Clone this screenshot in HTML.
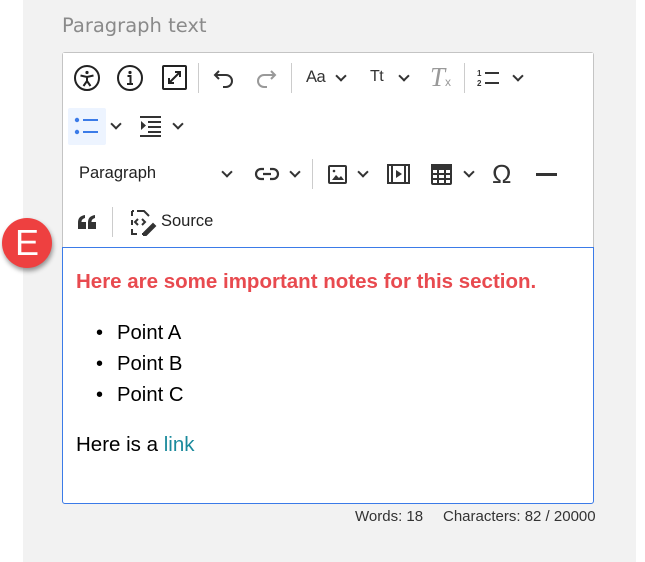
<!DOCTYPE html>
<html><head><style>
body{margin:0;width:645px;height:562px;background:#fff;font-family:"Liberation Sans",sans-serif;position:relative;overflow:hidden}
.a{position:absolute}
.panel{left:23px;top:0;width:613px;height:562px;background:#f2f2f2}
.lbl{left:62px;top:14px;color:#8a8a8a;font-family:"DejaVu Sans","Liberation Sans",sans-serif;font-size:19.5px}
.ed{left:62px;top:52px;width:530px;height:450px;border:1px solid #c4c4c4;border-radius:3px;background:#fff}
.tb{left:63px;top:53px;width:530px;height:194px;background:#fff}
.area{left:62px;top:247px;width:530px;height:255px;border:1px solid #3b7be8;border-radius:0 0 3px 3px;background:#fff}
.sep{width:1px;height:30px;background:#ccc}
svg{position:absolute;overflow:visible}
.t{font-size:14px;color:#333}
.chev{position:absolute;width:6px;height:6px;border-right:2px solid #333;border-bottom:2px solid #333;transform:rotate(45deg)}
</style></head><body>
<div class="a panel"></div>
<div class="a lbl">Paragraph text</div>
<div class="a ed"></div>
<div class="a tb"></div>
<!-- row1 -->
<svg style="left:74px;top:65px" width="26" height="26" viewBox="0 0 26 26" fill="none" stroke="#222" stroke-width="2"><circle cx="13" cy="13" r="12"/><circle cx="13" cy="7.5" r="1.6" fill="#222" stroke="none"/><path d="M6.5 10.5l6.5 1.5 6.5-1.5M13 12v4l-3.5 5M13 16l3.5 5"/></svg>
<svg style="left:117px;top:65px" width="26" height="26" viewBox="0 0 26 26" fill="none" stroke="#222" stroke-width="2"><circle cx="13" cy="13" r="12"/><circle cx="13" cy="7.5" r="1.6" fill="#222" stroke="none"/><path d="M10.5 11h3v8M10 19h6"/></svg>
<svg style="left:162px;top:65px" width="25" height="25" viewBox="0 0 25 25" fill="none" stroke="#222" stroke-width="2"><rect x="1" y="1" width="23" height="23" rx="1"/><path d="M7 18l11-11M13 7h5v5M7 13v5h5"/></svg>
<div class="a sep" style="left:198px;top:63px"></div>
<svg style="left:213px;top:69px" width="22" height="18" viewBox="0 0 22 18" fill="none" stroke="#333" stroke-width="2"><path d="M6 2L2 6l4 4M2 6h11a6 6 0 010 12h-3"/></svg>
<svg style="left:255px;top:69px" width="22" height="18" viewBox="0 0 22 18" fill="none" stroke="#999" stroke-width="2"><path d="M16 2l4 4-4 4M20 6H9a6 6 0 000 12h3"/></svg>
<div class="a sep" style="left:291px;top:63px"></div>
<div class="a t" style="left:306px;top:68px;font-size:16.5px;letter-spacing:-0.5px">Aa</div><div class="chev" style="left:337px;top:72px"></div>
<div class="a t" style="left:370px;top:68px;font-size:16px;letter-spacing:-0.5px">Tt</div><div class="chev" style="left:400px;top:72px"></div>
<div class="a" style="left:430px;top:62px;font-family:'Liberation Serif',serif;font-style:italic;font-size:27px;color:#999">T<span style="font-size:12px;font-style:normal;font-family:'Liberation Sans'">x</span></div>
<div class="a sep" style="left:464px;top:63px"></div>
<svg style="left:477px;top:69px" width="24" height="18" viewBox="0 0 24 18" fill="#333"><text x="0" y="7" font-size="8" font-family="Liberation Sans" font-weight="bold">1</text><text x="0" y="17" font-size="8" font-family="Liberation Sans" font-weight="bold">2</text><rect x="8" y="3" width="14" height="2"/><rect x="8" y="13" width="14" height="2"/></svg>
<div class="chev" style="left:514px;top:72px"></div>
<!-- row2 -->
<div class="a" style="left:68px;top:108px;width:38px;height:37px;background:#edf4ff;border-radius:2px"></div>
<svg style="left:74px;top:117px" width="26" height="18" viewBox="0 0 26 18" fill="#3b7be8"><circle cx="3" cy="3" r="2.2"/><circle cx="3" cy="15" r="2.2"/><rect x="9" y="2" width="15" height="2"/><rect x="9" y="14" width="15" height="2"/></svg>
<div class="chev" style="left:112px;top:120px"></div>
<svg style="left:140px;top:115px" width="22" height="22" viewBox="0 0 22 22" fill="#333"><rect x="0" y="1" width="21" height="2"/><rect x="8" y="6" width="13" height="2"/><rect x="8" y="11" width="13" height="2"/><rect x="8" y="16" width="13" height="2"/><rect x="0" y="20" width="21" height="2"/><path d="M1 6l5 4.5-5 4.5z"/></svg>
<div class="chev" style="left:174px;top:120px"></div>
<!-- row3 -->
<div class="a t" style="left:79px;top:164px;font-size:16.5px;color:#222">Paragraph</div><div class="chev" style="left:223px;top:168px"></div>
<svg style="left:256px;top:167px" width="22" height="14" viewBox="0 0 22 14" fill="none" stroke="#333" stroke-width="2.2"><path d="M8 2H5a5 5 0 000 10h3M14 2h3a5 5 0 010 10h-3M7 7h8"/></svg>
<div class="chev" style="left:291px;top:168px"></div>
<div class="a sep" style="left:312px;top:159px"></div>
<svg style="left:328px;top:165px" width="19" height="19" viewBox="0 0 19 19" fill="none" stroke="#333" stroke-width="2"><rect x="1" y="1" width="17" height="17" rx="1"/><path d="M4 15l4-5 3 3 2-2 3 4z" fill="#333" stroke="none"/><circle cx="6" cy="6" r="1.3" fill="#333" stroke="none"/></svg>
<div class="chev" style="left:359px;top:168px"></div>
<svg style="left:387px;top:164px" width="23" height="20" viewBox="0 0 23 20" fill="none" stroke="#333" stroke-width="2"><rect x="1" y="1" width="21" height="18"/><path d="M5 1v18M18 1v18"/><path d="M9 6l6 4-6 4z" fill="#333" stroke="none"/></svg>
<svg style="left:431px;top:164px" width="21" height="21" viewBox="0 0 21 21" fill="none" stroke="#333" stroke-width="2"><rect x="1" y="1" width="19" height="19" rx="1"/><path d="M1 5h19M1 10h19M1 15h19M7 5v15M14 5v15"/><rect x="1" y="1" width="19" height="4" fill="#333"/></svg>
<div class="chev" style="left:465px;top:168px"></div>
<div class="a" style="left:492px;top:159px;font-size:26px;color:#333">Ω</div>
<div class="a" style="left:536px;top:173px;width:21px;height:3px;background:#333"></div>
<!-- row4 -->
<svg style="left:78px;top:215px" width="19" height="14" viewBox="0 0 19 14" fill="#333"><path d="M0 14V8C0 3 2 1 7 0v3C4 4 3.5 5.5 3.5 7H8v7zM10 14V8c0-5 2-7 7-8v3c-3 1-3.5 2.5-3.5 4H18v7z"/></svg>
<div class="a sep" style="left:112px;top:207px"></div>
<svg style="left:129px;top:210px" width="26" height="26" viewBox="0 0 26 26" fill="none" stroke="#333" stroke-width="2"><path d="M8 1h7l5 5M3 1h2M3 1v5M3 10v5M3 19v5h5M13 24h1M3 6v0"/><path d="M9 9l-3 3 3 3M13 9l3 3-3 3"/><path d="M15 23l9-9 2 2-9 9h-2z" fill="#333"/></svg>
<div class="a t" style="left:161px;top:212px;font-size:16.5px;color:#222">Source</div>
<!-- content -->
<div class="a area"></div>
<div class="a" style="left:76px;top:270px;font-size:20.5px;font-weight:bold;color:#e84a4f">Here are some important notes for this section.</div>
<div class="a" style="left:117px;top:318px;font-size:20.3px;line-height:31px;color:#000">Point A<br>Point B<br>Point C</div>
<div class="a" style="left:96px;top:318px;font-size:20px;line-height:31px">•<br>•<br>•</div>
<div class="a" style="left:76px;top:433px;font-size:20.5px;color:#000">Here is a <span style="color:#1a8a9c">link</span></div>
<div class="a" style="left:355px;top:508px;font-size:15px;color:#333">Words: 18</div>
<div class="a" style="left:443px;top:508px;font-size:15px;color:#333">Characters: 82 / 20000</div>
<!-- badge -->
<div class="a" style="left:2px;top:218px;width:50px;height:50px;border-radius:50%;background:#ee4040;box-shadow:1px 3px 5px rgba(0,0,0,.4);color:#fff;font-size:36px;text-align:center;line-height:50px">E</div>
</body></html>
